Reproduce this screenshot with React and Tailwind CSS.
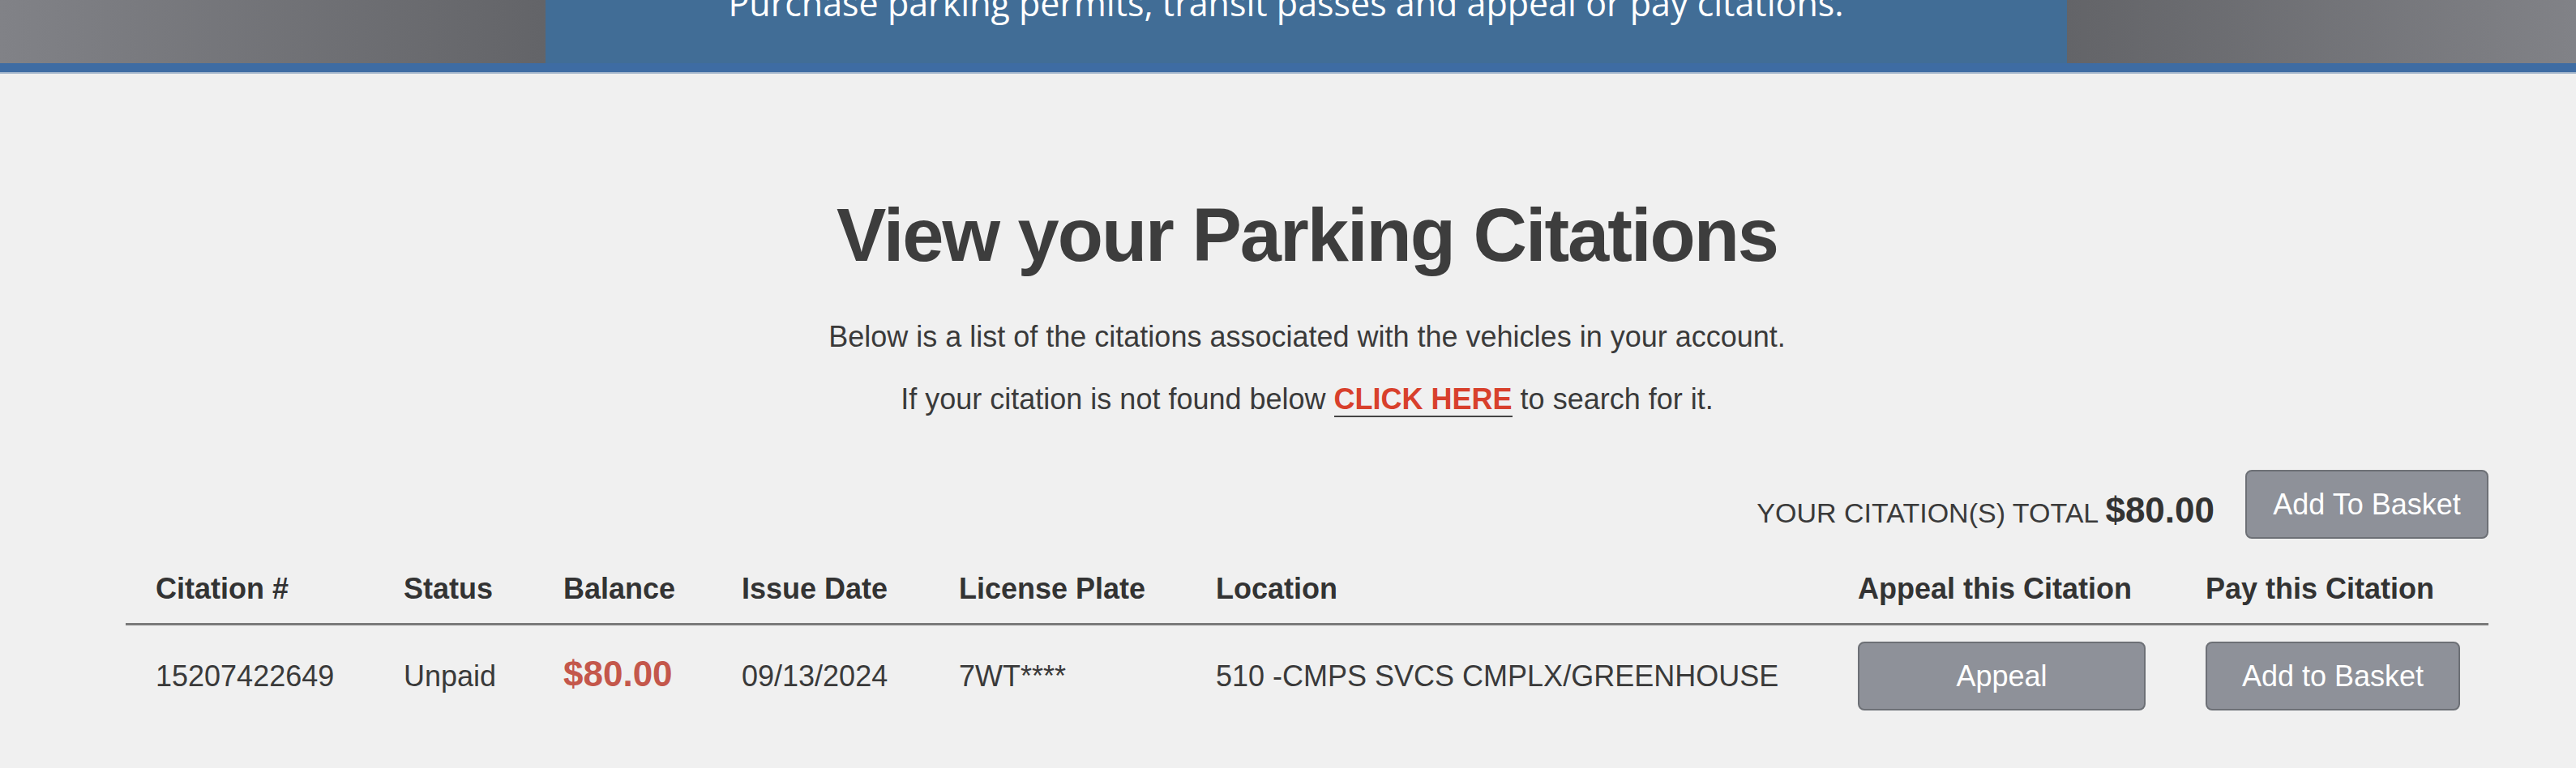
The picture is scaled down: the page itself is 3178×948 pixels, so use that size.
export default function App() {
  const cols = "grid grid-cols-[306px_197px_220px_268px_317px_792px_429px_386px]";
  return (
    <div className="min-h-[948px] w-full bg-[#f0f0f0] font-['Liberation_Sans',Arial,sans-serif] text-[#3a3a3a]">
      {/* Banner */}
      <div className="flex h-[78px]">
        <div className="w-[673px] bg-gradient-to-r from-[#818287] to-[#636468]" />
        <div className="flex flex-1 justify-center overflow-hidden bg-[#416d96] pr-[50px]">
          <p className="mt-[-18px] whitespace-nowrap font-['Open_Sans',sans-serif] text-[43px] leading-none text-white">
            Purchase parking permits, transit passes and appeal or pay citations.
          </p>
        </div>
        <div className="w-[628px] bg-gradient-to-r from-[#636468] to-[#818287]" />
      </div>
      <div className="h-[11px] bg-[#3e6ca3]" />
      <div className="h-[2px] bg-[#a3b6cc]" />

      {/* Content */}
      <div className="ml-[155px] w-[2915px]">
        <h1 className="mt-[153px] text-center text-[92px] font-bold leading-none tracking-[-2px] text-[#3d3d3d]">
          View your Parking Citations
        </h1>
        <p className="mt-[62px] text-center text-[36px] leading-none">
          Below is a list of the citations associated with the vehicles in your account.
        </p>
        <p className="mt-[41px] text-center text-[36px] leading-none">
          If your citation is not found below{" "}
          <a className="border-b-2 border-[#444] font-bold text-[#d8402c]">CLICK HERE</a> to search for it.
        </p>

        <div className="mt-[69px] flex justify-end">
          <p className="mr-[38px] mt-[28px] self-start text-[34px] leading-[44px]">
            YOUR CITATION(S) TOTAL <span className="text-[44px] font-bold text-[#333]">$80.00</span>
          </p>
          <button className="h-[85px] w-[300px] rounded-lg border-2 border-[#6d7076] bg-[#8e9199] text-[36px] text-white">
            Add To Basket
          </button>
        </div>

        {/* Table header */}
        <div className={`${cols} border-b-[3px] border-[#7a7a7a] pb-[24px] pt-[44px] text-[36px] font-bold leading-none text-[#333]`}>
          <div className="pl-[37px]">Citation #</div>
          <div className="pl-[37px]">Status</div>
          <div className="pl-[37px]">Balance</div>
          <div className="pl-[37px]">Issue Date</div>
          <div className="pl-[37px]">License Plate</div>
          <div className="pl-[37px]">Location</div>
          <div className="pl-[37px]">Appeal this Citation</div>
          <div className="pl-[37px]">Pay this Citation</div>
        </div>

        {/* Data row */}
        <div className={`${cols} items-center pt-[20px] text-[36px] leading-none`}>
          <div className="pl-[37px]">15207422649</div>
          <div className="pl-[37px]">Unpaid</div>
          <div className="pl-[37px] pb-[5px] text-[44px] font-bold leading-[36px] text-[#c4574b]">$80.00</div>
          <div className="pl-[37px]">09/13/2024</div>
          <div className="pl-[37px]">7WT****</div>
          <div className="pl-[37px]">510 -CMPS SVCS CMPLX/GREENHOUSE</div>
          <div className="pl-[37px]">
            <button className="h-[85px] w-[355px] rounded-lg border-2 border-[#6d7076] bg-[#8e9199] text-[36px] text-white">
              Appeal
            </button>
          </div>
          <div className="pl-[37px]">
            <button className="h-[85px] w-[314px] rounded-lg border-2 border-[#6d7076] bg-[#8e9199] text-[36px] text-white">
              Add to Basket
            </button>
          </div>
        </div>
      </div>
    </div>
  );
}
